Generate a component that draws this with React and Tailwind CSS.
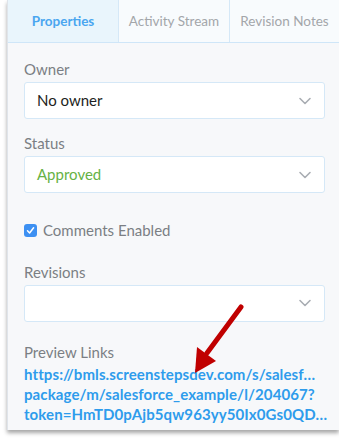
import React from "react";

const Chevron = () => (
  <svg width="14" height="14" viewBox="0 0 14 14" className="text-[#a9adb3]">
    <path d="M2 4.5 L7 9.5 L12 4.5" fill="none" stroke="currentColor" strokeWidth="1.6" strokeLinecap="round" strokeLinejoin="round" />
  </svg>
);

const Select = ({ children, className = "" }) => (
  <div className={`h-[37px] bg-white border border-[#d5e8f7] rounded-[3px] flex items-center justify-between pl-3 pr-3 ${className}`}>
    <span>{children}</span>
    <Chevron />
  </div>
);

const Label = ({ children }) => (
  <div className="text-[15px] text-[#7b7f84] leading-5 mb-[3px]">{children}</div>
);

export default function App() {
  return (
    <div className="relative w-[339px] h-[446px] bg-white font-['Lato',sans-serif]">
      <div className="ml-[7px] h-[430px] bg-[#f7f8fa] border-l border-[#dfe4ea] shadow-[0_3px_4px_rgba(0,0,0,0.35)] flex flex-col">
        {/* Tabs */}
        <div className="h-[43px] flex border-b border-[#cfe6f8] text-[13.5px]">
          <div className="w-[111px] flex items-center justify-center bg-[#e9f5fc] border-r border-[#d5e8f7] text-[#4aa6f0] font-bold">
            Properties
          </div>
          <div className="w-[111px] flex items-center justify-center bg-[#f8fbfd] border-r border-[#d5e8f7] text-[#a3a6aa]">
            Activity Stream
          </div>
          <div className="flex-1 flex items-center justify-center bg-[#f8fbfd] text-[#a3a6aa]">
            Revision Notes
          </div>
        </div>

        {/* Body */}
        <div className="pl-[16px] pr-[14px] pt-[16px]">
          <Label>Owner</Label>
          <Select className="text-[15px] text-[#1d1f22]">No owner</Select>

          <div className="mt-[14px]">
            <Label>Status</Label>
            <Select className="text-[15px] text-[#66b245]">Approved</Select>
          </div>

          <div className="mt-[26px] flex items-center gap-[6px]">
            <div className="w-[13px] h-[13px] rounded-[3px] bg-[#3d90f2] flex items-center justify-center">
              <svg width="9" height="9" viewBox="0 0 9 9">
                <path d="M1.5 4.8 L3.6 7 L7.6 1.8" fill="none" stroke="white" strokeWidth="1.5" strokeLinecap="round" strokeLinejoin="round" />
              </svg>
            </div>
            <span className="text-[15px] text-[#7b7f84]">Comments Enabled</span>
          </div>

          <div className="mt-[20px]">
            <Label>Revisions</Label>
            <Select />
          </div>

          <div className="mt-[20px]">
            <Label>Preview Links</Label>
            <div className="text-[15px] font-bold text-[#2e9cec] leading-[20px] -mt-[1px] whitespace-nowrap tracking-[0.1px]">
              <div>https://bmls.screenstepsdev.com/s/salesf…</div>
              <div>package/m/salesforce_example/l/204067?</div>
              <div>token=HmTD0pAjb5qw963yy50Ix0Gs0QD…</div>
            </div>
          </div>
        </div>
      </div>

      {/* Annotation arrow */}
      <svg className="absolute left-0 top-0 pointer-events-none" width="339" height="446" viewBox="0 0 339 446">
        <line x1="241" y1="307" x2="207" y2="353" stroke="#c00000" strokeWidth="5" strokeLinecap="round" />
        <polygon points="195,373 197,347 216,361" fill="#c00000" />
      </svg>
    </div>
  );
}
